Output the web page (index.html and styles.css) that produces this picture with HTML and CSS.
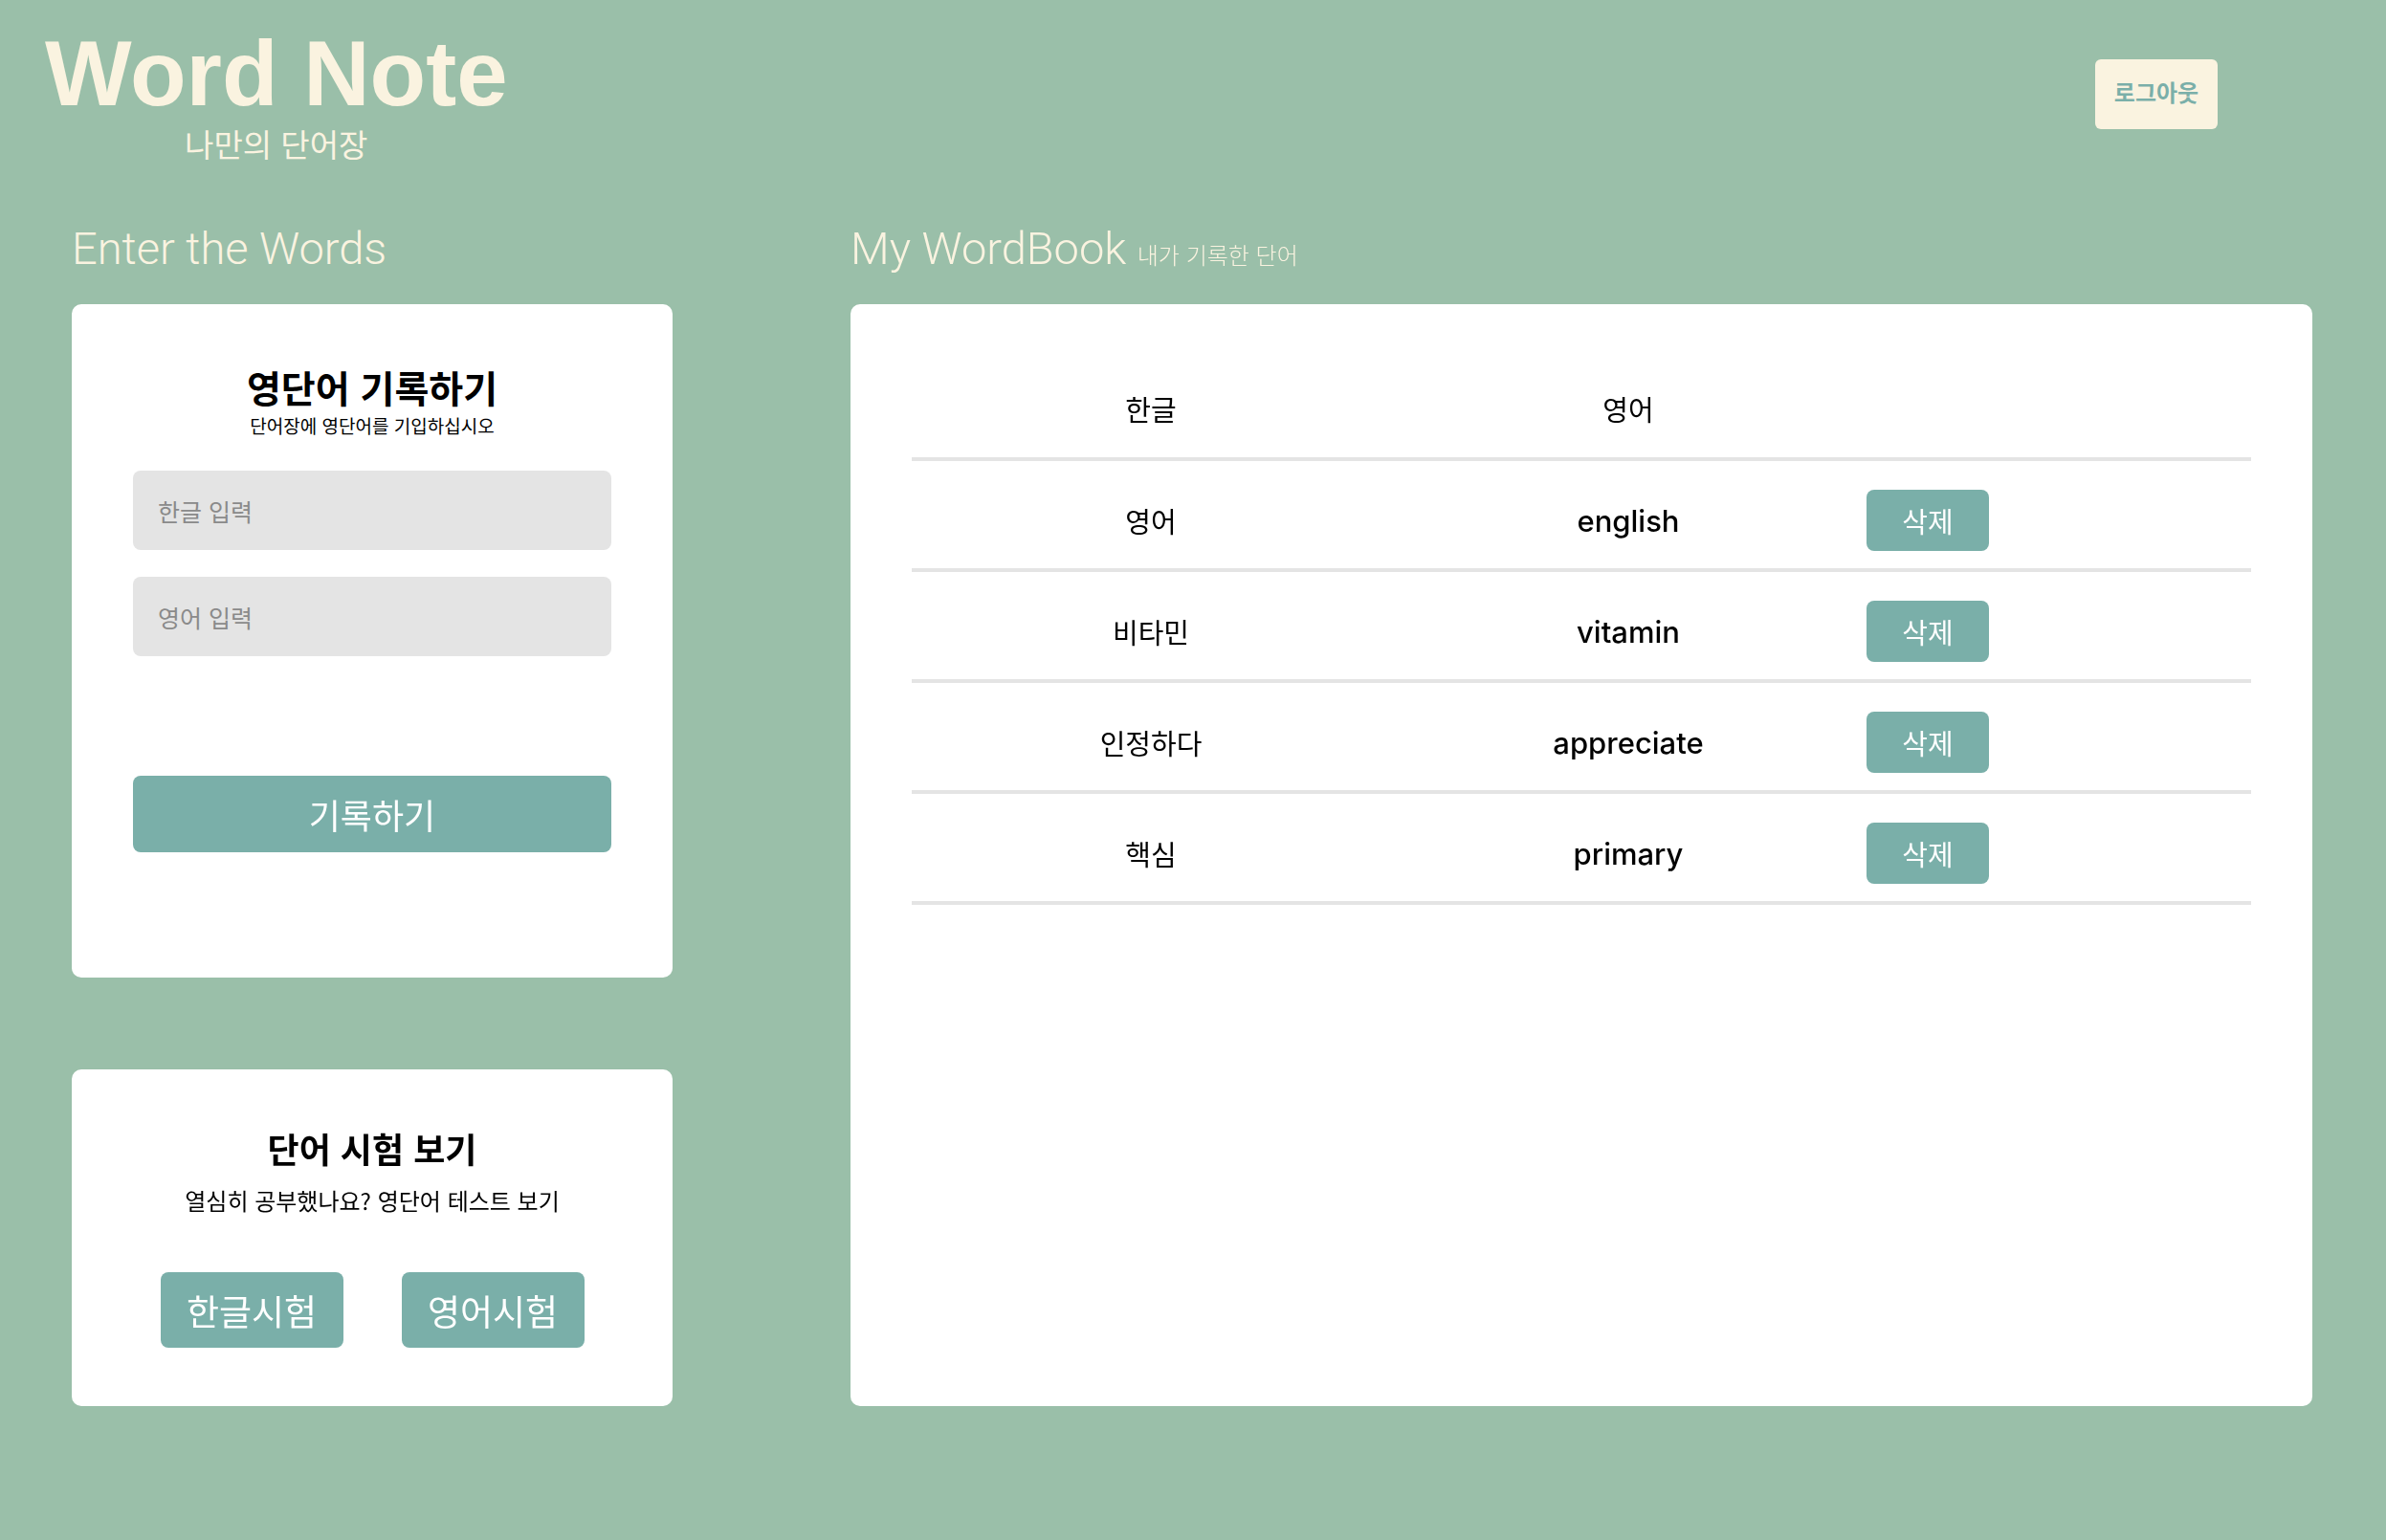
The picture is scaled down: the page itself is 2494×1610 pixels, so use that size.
FILE: index.html
```html
<!DOCTYPE html>
<html lang="ko">
<head>
<meta charset="utf-8">
<title>Word Note</title>
<link rel="stylesheet" href="styles.css">
</head>
<body>
<header class="top">
  <div class="brand">
    <h1 class="brand-title">Word Note</h1>
    <p class="brand-sub">나만의 단어장</p>
  </div>
  <button class="logout" type="button">로그아웃</button>
</header>
<main class="main">
  <section class="col-left">
    <h2 class="section-title">Enter the Words</h2>
    <div class="card card-enter">
      <h3 class="card-title">영단어 기록하기</h3>
      <p class="card-desc">단어장에 영단어를 기입하십시오</p>
      <div class="inputs">
        <input class="field" type="text" placeholder="한글 입력" autofocus>
        <input class="field" type="text" placeholder="영어 입력">
      </div>
      <button class="btn btn-save" type="button">기록하기</button>
    </div>
    <div class="card card-test">
      <h3 class="card-title card-title-sm">단어 시험 보기</h3>
      <p class="card-desc card-desc-lg">열심히 공부했나요? 영단어 테스트 보기</p>
      <div class="test-buttons">
        <button class="btn btn-test" type="button">한글시험</button>
        <button class="btn btn-test" type="button">영어시험</button>
      </div>
    </div>
  </section>
  <section class="col-right">
    <h2 class="section-title">My WordBook <span class="section-sub">내가 기록한 단어</span></h2>
    <div class="card card-book">
      <table class="words">
        <thead>
          <tr><th class="c-ko">한글</th><th class="c-en">영어</th><th class="c-act"></th></tr>
        </thead>
        <tbody>
          <tr><td class="c-ko">영어</td><td class="c-en">english</td><td class="c-act"><button class="btn btn-del" type="button">삭제</button></td></tr>
          <tr><td class="c-ko">비타민</td><td class="c-en">vitamin</td><td class="c-act"><button class="btn btn-del" type="button">삭제</button></td></tr>
          <tr><td class="c-ko">인정하다</td><td class="c-en">appreciate</td><td class="c-act"><button class="btn btn-del" type="button">삭제</button></td></tr>
          <tr><td class="c-ko">핵심</td><td class="c-en">primary</td><td class="c-act"><button class="btn btn-del" type="button">삭제</button></td></tr>
        </tbody>
      </table>
    </div>
  </section>
</main>
</body>
</html>
```
FILE: styles.css
```css
* { box-sizing: border-box; }

html, body {
  margin: 0;
  padding: 0;
}

body {
  background: #9abfa9;
  min-height: 100vh;
  font-family: "Noto Sans CJK KR", sans-serif;
  color: #000;
}

.top {
  display: flex;
  justify-content: space-between;
  align-items: flex-start;
  padding: 29px 176px 0 47px;
}

.brand {
  display: flex;
  flex-direction: column;
  align-items: center;
}

.brand-title {
  margin: 0;
  font-family: "Liberation Sans", Arial, sans-serif;
  font-weight: 700;
  font-size: 96px;
  line-height: 96px;
  color: #faf3e0;
  white-space: nowrap;
}

.brand-sub {
  margin: 5px 0 0;
  font-size: 33px;
  line-height: 40px;
  color: #faf3e0;
  font-weight: 400;
}

.logout {
  margin-top: 33px;
  width: 128px;
  height: 73px;
  border: none;
  border-radius: 6px;
  background: #faf3e0;
  color: #7aafa9;
  font-family: "Noto Sans CJK KR", sans-serif;
  font-weight: 700;
  font-size: 24px;
  padding: 0 0 7px;
}

.main {
  display: flex;
  align-items: flex-start;
  padding: 62px 77px 0 75px;
  gap: 186px;
}

.col-left {
  width: 628px;
  flex: none;
}

.col-right {
  flex: 1;
}

.section-title {
  height: 56px;
  margin: 0 0 30px;
  font-family: Roboto, "Noto Sans CJK KR", sans-serif;
  font-weight: 300;
  font-size: 47px;
  line-height: 56px;
  color: #faf3e0;
  white-space: nowrap;
}

.section-sub {
  font-family: "Noto Sans CJK KR", sans-serif;
  font-size: 24px;
  line-height: 1;
  font-weight: 300;
}

.card {
  background: #fff;
  border-radius: 10px;
}

.card-enter {
  height: 704px;
  padding: 62px 64px 0;
  display: flex;
  flex-direction: column;
  align-items: stretch;
}

.card-title {
  margin: 0;
  text-align: center;
  font-weight: 700;
  font-size: 39px;
  line-height: 48px;
}

.card-desc {
  margin: 5px 0 0;
  text-align: center;
  font-size: 19px;
  line-height: 24px;
}

.inputs {
  display: flex;
  flex-direction: column;
  gap: 28px;
  margin-top: 35px;
}

.field {
  height: 83px;
  border: none;
  border-radius: 8px;
  background: #e4e4e4;
  padding: 0 26px;
  font-family: "Noto Sans CJK KR", sans-serif;
  font-size: 25px;
  color: #222;
  outline: none;
}

.field::placeholder {
  color: #8a8a8a;
}

.btn {
  border: none;
  background: #7aafa9;
  color: #fff;
  font-family: "Noto Sans CJK KR", sans-serif;
  padding: 0;
}

.btn-save {
  margin-top: 125px;
  height: 80px;
  border-radius: 8px;
  font-size: 36px;
}

.card-test {
  margin-top: 96px;
  height: 352px;
  padding: 60px 0 0;
  display: flex;
  flex-direction: column;
  align-items: center;
}

.card-title-sm {
  font-size: 36px;
  line-height: 44px;
}

.card-desc-lg {
  margin-top: 19px;
  font-size: 24px;
  line-height: 28px;
}

.test-buttons {
  display: flex;
  gap: 61px;
  margin-top: 61px;
}

.btn-test {
  width: 191px;
  height: 79px;
  border-radius: 8px;
  font-size: 37px;
}

.card-book {
  height: 1152px;
  padding: 46px 64px 0 64px;
}

.words {
  width: 100%;
  border-collapse: collapse;
  font-family: Inter, "Noto Sans CJK KR", sans-serif;
  font-size: 31px;
}

.words th,
.words td {
  height: 116px;
  padding: 12px 0 0;
  vertical-align: middle;
  border-bottom: 4px solid #e4e4e4;
  font-weight: 400;
}

.words .c-ko { width: 500px; text-align: center; }
.words .c-en { width: 498px; text-align: center; font-weight: 500; }
.words th.c-en { font-weight: 400; }
.words .c-act { text-align: left; }

.words td.c-ko { font-family: "Noto Sans CJK KR", sans-serif; font-size: 29px; }
.words th { font-family: "Noto Sans CJK KR", sans-serif; font-size: 29px; }

.btn-del {
  width: 128px;
  height: 64px;
  border-radius: 8px;
  font-size: 29px;
  vertical-align: middle;
}
```
